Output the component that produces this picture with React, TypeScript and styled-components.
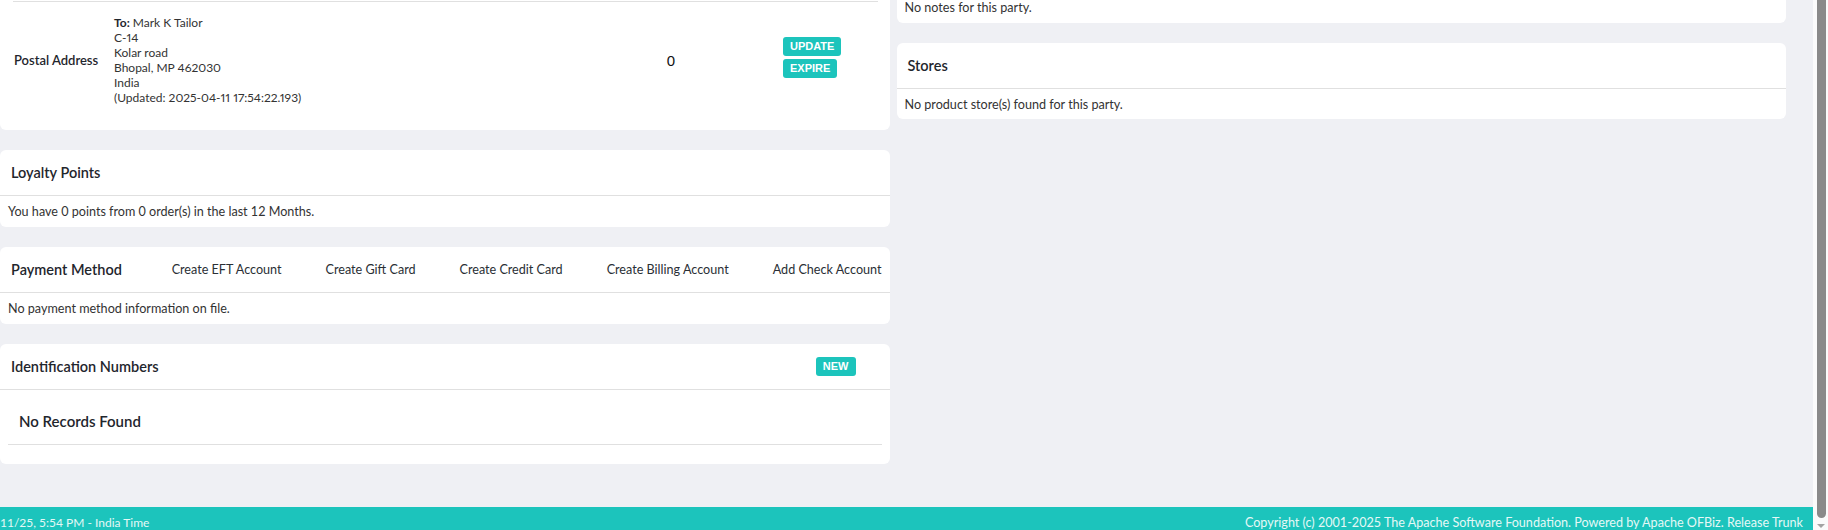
import React from "react";
import styled, { createGlobalStyle } from "styled-components";

const GlobalStyle = createGlobalStyle`
  html, body {
    margin: 0;
    padding: 0;
    height: 100%;
    overflow: hidden;
  }
  body {
    background: #eff0f4;
    font-family: Lato, "Liberation Sans", sans-serif;
    color: #333;
  }
  #root {
    height: 100%;
  }
`;

const TEAL = "#1cc4bc";
const LINE = "#e0e0e0";

const Page = styled.div`
  display: flex;
  height: 100vh;
`;

const Viewport = styled.div`
  flex: 1;
  min-width: 0;
  display: flex;
  flex-direction: column;
`;

const Content = styled.main`
  flex: 1;
  display: grid;
  grid-template-columns: 1fr 1fr;
  column-gap: 7px;
  padding-right: 27px;
  align-items: start;
  overflow: hidden;
`;

const Column = styled.div`
  display: flex;
  flex-direction: column;
  gap: 20px;
`;

const Card = styled.section<{ $cut?: boolean }>`
  background: #fff;
  border-radius: ${(p) => (p.$cut ? "0 0 6px 6px" : "6px")};
`;

const CardHeader = styled.header<{ $padRight?: number }>`
  display: flex;
  align-items: center;
  height: 45px;
  padding: 0 ${(p) => p.$padRight ?? 0}px 0 11px;
  border-bottom: 1px solid ${LINE};
`;

const CardTitle = styled.h3`
  margin: 0;
  font-size: 14.5px;
  font-weight: 600;
  color: #1f262d;
`;

const CardBody = styled.div<{ $top?: number; $bottom?: number }>`
  padding: ${(p) => p.$top ?? 8}px 8px ${(p) => p.$bottom ?? 8}px;
  font-size: 12.6px;
  line-height: 15px;
  color: #333;
`;

/* Postal address */
const AddressCard = styled(Card)`
  padding: 1px 12px 12px 13px;
`;

const AddressRow = styled.div`
  display: grid;
  grid-template-columns: 101px 505px 104px 1fr;
  align-items: center;
  padding: 13px 0;
  border-top: 1px solid ${LINE};
`;

const RowLabel = styled.div`
  padding-left: 1px;
  font-size: 13px;
  font-weight: 600;
  color: #1f262d;
`;

const Address = styled.address`
  font-style: normal;
  font-size: 12px;
  line-height: 15px;
  color: #333;
  font-variant-numeric: proportional-nums;

  b {
    font-weight: 700;
    color: #1f262d;
  }
`;

const Count = styled.div`
  text-align: center;
  font-family: "Liberation Sans", Arial, sans-serif;
  font-size: 15px;
  color: #111;
`;

const ActionStack = styled.div`
  align-self: start;
  display: flex;
  flex-direction: column;
  align-items: flex-start;
  gap: 3px;
  padding: 22px 0 0 60px;
`;

const Badge = styled.button`
  border: 0;
  margin: 0;
  height: 19px;
  padding: 0 7px;
  border-radius: 3px;
  background: ${TEAL};
  color: #fff;
  font-family: "Liberation Sans", Arial, sans-serif;
  font-size: 11px;
  font-weight: 700;
  line-height: 19px;
  text-transform: uppercase;
  cursor: pointer;
`;

/* Payment header links */
const HeaderLinks = styled.nav`
  margin-left: auto;
  display: flex;
  gap: 44px;
  padding-right: 8px;
`;

const HeaderLink = styled.a`
  font-size: 12.6px;
  color: #2a2f35;
  text-decoration: none;
  cursor: pointer;
`;

const NewBadge = styled(Badge)`
  margin-left: auto;
`;

const NoRecords = styled.div`
  padding: 21px 11px 13px;
  border-bottom: 1px solid ${LINE};
  font-size: 15px;
  font-weight: 600;
  line-height: 20px;
  color: #1f262d;
`;

const NotesBody = styled(CardBody)`
  line-height: 16px;
`;

/* Footer */
const Footer = styled.footer`
  height: 23px;
  box-sizing: border-box;
  padding: 8px 10px 0 0;
  display: flex;
  justify-content: space-between;
  background: ${TEAL};
  color: #e4f8f6;
  font-size: 12.6px;
  line-height: 16px;
`;

const FooterLeft = styled.span`
  font-size: 12px;
`;

/* Scrollbar strip */
const ScrollTrack = styled.div`
  width: 15px;
  background: #fbfbfb;
  display: flex;
  flex-direction: column;
  align-items: center;
`;

const ScrollThumb = styled.div`
  width: 9px;
  height: 518px;
  margin-left: 1px;
  background: #8a8a8a;
  border-radius: 0 0 5px 5px;
`;

const ScrollArrow = styled.svg`
  margin-top: 6px;
  margin-left: 1px;
`;

const paymentLinks = [
  "Create EFT Account",
  "Create Gift Card",
  "Create Credit Card",
  "Create Billing Account",
  "Add Check Account",
];

export default function App() {
  return (
    <>
      <GlobalStyle />
      <Page>
        <Viewport>
          <Content>
            <Column>
              <AddressCard $cut>
                <AddressRow>
                  <RowLabel>Postal Address</RowLabel>
                  <Address>
                    <b>To:</b> Mark K Tailor
                    <br />
                    C-14
                    <br />
                    Kolar road
                    <br />
                    Bhopal, MP 462030
                    <br />
                    India
                    <br />
                    (Updated: 2025-04-11 17:54:22.193)
                  </Address>
                  <Count>0</Count>
                  <ActionStack>
                    <Badge>Update</Badge>
                    <Badge>Expire</Badge>
                  </ActionStack>
                </AddressRow>
              </AddressCard>

              <Card>
                <CardHeader>
                  <CardTitle>Loyalty Points</CardTitle>
                </CardHeader>
                <CardBody>
                  You have 0 points from 0 order(s) in the last 12 Months.
                </CardBody>
              </Card>

              <Card>
                <CardHeader>
                  <CardTitle>Payment Method</CardTitle>
                  <HeaderLinks>
                    {paymentLinks.map((l) => (
                      <HeaderLink key={l}>{l}</HeaderLink>
                    ))}
                  </HeaderLinks>
                </CardHeader>
                <CardBody $bottom={8}>
                  No payment method information on file.
                </CardBody>
              </Card>

              <Card>
                <CardHeader $padRight={34}>
                  <CardTitle>Identification Numbers</CardTitle>
                  <NewBadge>New</NewBadge>
                </CardHeader>
                <CardBody $top={0} $bottom={19}>
                  <NoRecords>No Records Found</NoRecords>
                </CardBody>
              </Card>
            </Column>

            <Column>
              <Card $cut>
                <NotesBody $top={0} $bottom={7}>
                  No notes for this party.
                </NotesBody>
              </Card>
              <Card>
                <CardHeader>
                  <CardTitle>Stores</CardTitle>
                </CardHeader>
                <CardBody $top={8} $bottom={7}>
                  No product store(s) found for this party.
                </CardBody>
              </Card>
            </Column>
          </Content>
          <Footer>
            <FooterLeft>11/25, 5:54 PM - India Time</FooterLeft>
            <span>
              Copyright (c) 2001-2025 The Apache Software Foundation. Powered by
              Apache OFBiz. Release Trunk
            </span>
          </Footer>
        </Viewport>
        <ScrollTrack>
          <ScrollThumb />
          <ScrollArrow width="8" height="4" viewBox="0 0 8 4">
            <path d="M0 0 H8 L4 4 Z" fill="#a3a3a3" />
          </ScrollArrow>
        </ScrollTrack>
      </Page>
    </>
  );
}
